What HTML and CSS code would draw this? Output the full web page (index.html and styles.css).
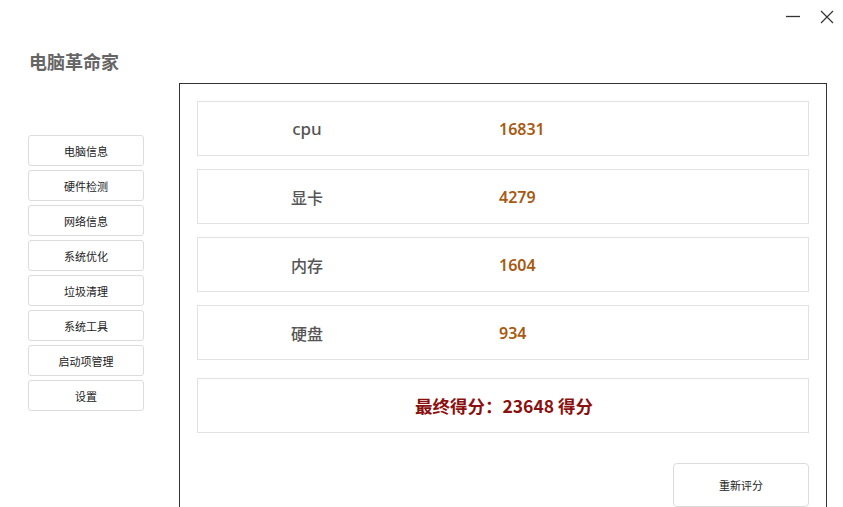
FILE: index.html
```html
<!DOCTYPE html>
<html lang="zh-CN">
<head>
<meta charset="utf-8">
<title>电脑革命家</title>
<link rel="stylesheet" href="styles.css">
</head>
<body>
<div class="window">
  <div class="topbar">
    <button class="win-btn" aria-label="最小化">
      <svg width="14" height="14" viewBox="0 0 14 14"><path d="M0 6.5H14" stroke="#333" stroke-width="1.3"/></svg>
    </button>
    <button class="win-btn" aria-label="关闭">
      <svg width="14" height="14" viewBox="0 0 14 14"><path d="M1 1L13 13M13 1L1 13" stroke="#333" stroke-width="1.2"/></svg>
    </button>
  </div>
  <div class="brand">电脑革命家</div>
  <div class="main">
    <nav class="sidebar">
      <button class="nav-btn">电脑信息</button>
      <button class="nav-btn">硬件检测</button>
      <button class="nav-btn">网络信息</button>
      <button class="nav-btn">系统优化</button>
      <button class="nav-btn">垃圾清理</button>
      <button class="nav-btn">系统工具</button>
      <button class="nav-btn">启动项管理</button>
      <button class="nav-btn">设置</button>
    </nav>
    <section class="panel">
      <div class="row">
        <span class="label latin">cpu</span>
        <span class="value">16831</span>
      </div>
      <div class="row">
        <span class="label">显卡</span>
        <span class="value">4279</span>
      </div>
      <div class="row">
        <span class="label">内存</span>
        <span class="value">1604</span>
      </div>
      <div class="row">
        <span class="label">硬盘</span>
        <span class="value">934</span>
      </div>
      <div class="row total">最终得分：23648 得分</div>
      <div class="actions">
        <button class="rescore">重新评分</button>
      </div>
    </section>
  </div>
</div>
</body>
</html>
```
FILE: styles.css
```css
* {
  box-sizing: border-box;
}

html, body {
  margin: 0;
  height: 100%;
  background: #fff;
  overflow: hidden;
}

body {
  font-family: "Noto Sans", "Noto Sans CJK SC", sans-serif;
  color: #222;
}

.window {
  display: flex;
  flex-direction: column;
  height: 100%;
}

.topbar {
  height: 40px;
  display: flex;
  justify-content: flex-end;
  align-items: flex-start;
  padding: 10px 9px 0 0;
  gap: 20px;
}

.win-btn {
  border: 0;
  background: transparent;
  padding: 0;
  width: 14px;
  height: 14px;
  display: flex;
}

.brand {
  height: 41px;
  display: flex;
  align-items: center;
  padding-left: 29px;
  margin-bottom: 2px;
  font-family: "Noto Sans CJK SC", sans-serif;
  font-weight: 700;
  font-size: 18px;
  color: #666;
}

.main {
  flex: 1;
  display: flex;
  align-items: flex-start;
  min-height: 0;
}

.sidebar {
  margin-left: 28px;
  margin-top: 52px;
  width: 116px;
  display: flex;
  flex-direction: column;
  gap: 4px;
}

.nav-btn {
  height: 31px;
  border: 1px solid #dcdcdc;
  border-radius: 3px;
  background: #fff;
  font-family: "Noto Sans CJK SC", sans-serif;
  font-size: 11px;
  color: #222;
  padding: 0;
}

.panel {
  margin-left: 35px;
  width: 648px;
  height: 440px;
  border: 1px solid #333;
  border-bottom: 0;
  padding: 17px 17px 0;
  display: flex;
  flex-direction: column;
  gap: 13px;
}

.row {
  height: 55px;
  border: 1px solid #e2e2e2;
  display: flex;
  align-items: center;
  flex-shrink: 0;
}

.label {
  width: 218px;
  text-align: center;
  font-family: "Noto Sans CJK SC", sans-serif;
  font-weight: 500;
  font-size: 16px;
  color: #555;
}

.label.latin {
  font-family: "Noto Sans", sans-serif;
  font-weight: 500;
  font-size: 17px;
}

.value {
  margin-left: 83px;
  font-family: "Noto Sans", sans-serif;
  font-weight: 600;
  font-size: 16px;
  color: #a95a12;
}

.total {
  margin-top: 5px;
  justify-content: center;
  padding-left: 2px;
  font-family: "Noto Sans CJK SC", sans-serif;
  font-weight: 700;
  font-size: 17.5px;
  color: #8b1010;
}

.actions {
  display: flex;
  justify-content: flex-end;
  margin-top: 16px;
}

.rescore {
  width: 136px;
  height: 44px;
  margin-top: 1px;
  border: 1px solid #dcdcdc;
  border-radius: 4px;
  background: #fff;
  font-family: "Noto Sans CJK SC", sans-serif;
  font-size: 11px;
  color: #222;
  padding: 0;
}
```
